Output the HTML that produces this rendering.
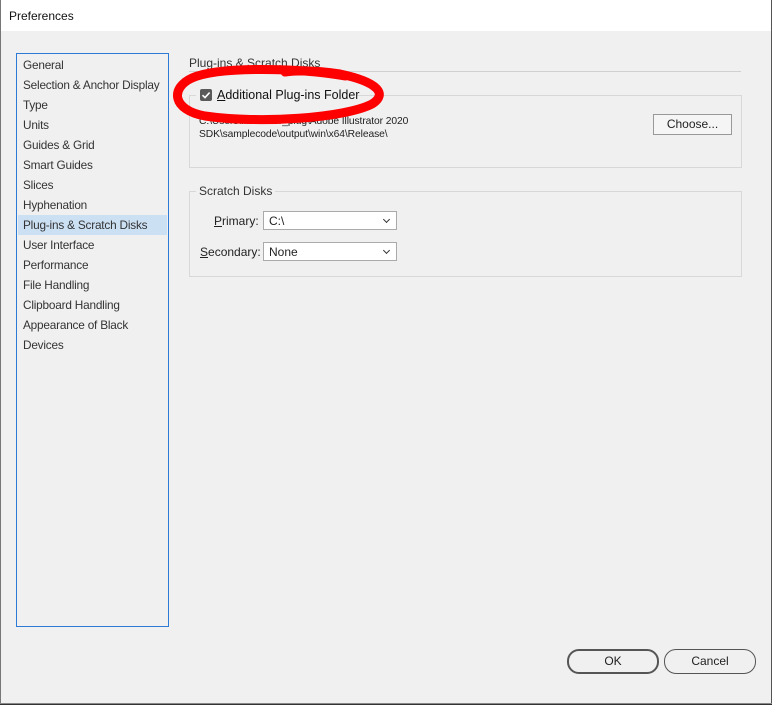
<!DOCTYPE html>
<html><head><style>
body{margin:0;width:772px;height:705px;background:#f0f0f0;font-family:"Liberation Sans",sans-serif;font-size:12px;color:#222;position:relative;overflow:hidden}
.a{position:absolute;white-space:nowrap}
.title{left:0;top:0;width:772px;height:31px;background:#fff}
.list{left:16px;top:53px;width:151px;height:572px;border:1px solid #2b7bd6;background:#f0f0f0}
.it{position:absolute;left:1px;width:149px;height:20px;line-height:20px;padding-left:5px;box-sizing:border-box;color:#333;white-space:nowrap;font-size:11.8px;letter-spacing:-0.2px}
.sel{background:#cce0f4}
.grp{border:1px solid #d8d8d8}
.dd{border:1px solid #aaa;background:#fff;height:19px;line-height:19px;padding-left:5px;box-sizing:border-box;width:134px}
.dd:after{content:"";position:absolute;right:7px;top:5px;width:4px;height:4px;border-right:1.3px solid #333;border-bottom:1.3px solid #333;transform:rotate(45deg)}
.btn{border:2px solid #555;border-radius:12px;text-align:center;line-height:21px;height:21px;width:88px;background:#f0f0f0}
</style></head><body>
<div class="a title"></div>
<div class="a" style="left:9px;top:9px;font-size:12px;color:#111">Preferences</div>
<div class="a" style="left:0;top:0;width:1px;height:705px;background:#777"></div>
<div class="a" style="left:771px;top:0;width:1px;height:705px;background:#555"></div>
<div class="a" style="left:0;top:703px;width:772px;height:1px;background:#888"></div>
<div class="a" style="left:0;top:704px;width:772px;height:1px;background:#333"></div>
<div class="a list">
<div class="it" style="top:1px">General</div>
<div class="it" style="top:21px">Selection &amp; Anchor Display</div>
<div class="it" style="top:41px">Type</div>
<div class="it" style="top:61px">Units</div>
<div class="it" style="top:81px">Guides &amp; Grid</div>
<div class="it" style="top:101px">Smart Guides</div>
<div class="it" style="top:121px">Slices</div>
<div class="it" style="top:141px">Hyphenation</div>
<div class="it sel" style="top:161px">Plug-ins &amp; Scratch Disks</div>
<div class="it" style="top:181px">User Interface</div>
<div class="it" style="top:201px">Performance</div>
<div class="it" style="top:221px">File Handling</div>
<div class="it" style="top:241px">Clipboard Handling</div>
<div class="it" style="top:261px">Appearance of Black</div>
<div class="it" style="top:281px">Devices</div>
</div>
<div class="a" style="left:189px;top:56px;color:#333">Plug-ins &amp; Scratch Disks</div>
<div class="a" style="left:189px;top:71px;width:552px;height:1px;background:#d0d0d0"></div>
<div class="a grp" style="left:189px;top:95px;width:551px;height:71px"></div>
<div class="a" style="left:196px;top:87px;width:160px;height:16px;background:#f0f0f0"></div>
<div class="a" style="left:200px;top:89px;width:12px;height:12px;background:#5a5a5a;border-radius:2px"></div>
<svg class="a" style="left:200px;top:89px" width="12" height="12"><path d="M2.5 6.2 L5 8.6 L9.6 3.6" stroke="#fff" stroke-width="1.6" fill="none"/></svg>
<div class="a" style="left:217px;top:88px;font-size:12.5px;color:#111"><u>A</u>dditional Plug-ins Folder</div>
<div class="a" style="left:199px;top:115px;font-size:10.3px;line-height:13px;color:#222;letter-spacing:-0.1px">C:\Users\Illustrator_plug\Adobe Illustrator 2020<br>SDK\samplecode\output\win\x64\Release\</div>
<div class="a" style="left:653px;top:114px;width:77px;height:19px;border:1px solid #999;background:#f5f5f5;text-align:center;line-height:19px">Choose...</div>
<div class="a grp" style="left:189px;top:191px;width:551px;height:84px"></div>
<div class="a" style="left:196px;top:184px;background:#f0f0f0;padding:0 3px;color:#333">Scratch Disks</div>
<div class="a" style="left:214px;top:214px"><u>P</u>rimary:</div>
<div class="a dd" style="left:263px;top:211px">C:\</div>
<div class="a" style="left:200px;top:245px"><u>S</u>econdary:</div>
<div class="a dd" style="left:263px;top:242px">None</div>
<svg class="a" style="left:0;top:0" width="772" height="705"><path d="M345 76 C300 68 220 66 192 78 C170 88 172 110 205 116 C260 124 345 118 372 104 C388 94 378 82 340 74 C320 71 300 70 285 72" stroke="#f00" stroke-width="9" fill="none" stroke-linecap="round"/></svg>
<div class="a btn" style="left:567px;top:649px">OK</div>
<div class="a btn" style="left:664px;top:649px;border-width:1px;width:90px;height:23px;line-height:23px">Cancel</div>
</body></html>
